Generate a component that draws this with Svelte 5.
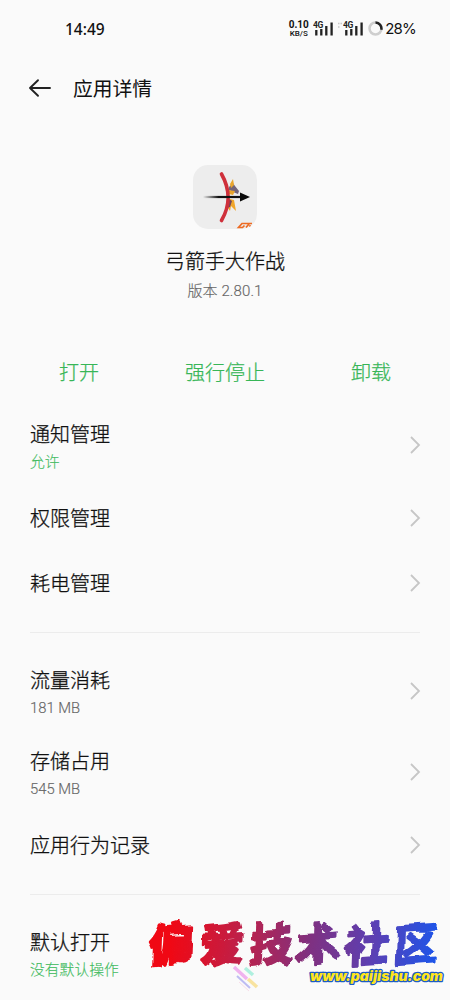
<script>
	const actions = ['打开', '强行停止', '卸载'];

	const groups = [
		[
			{ title: '通知管理', note: '允许', accent: true },
			{ title: '权限管理' },
			{ title: '耗电管理' }
		],
		[
			{ title: '流量消耗', note: '181 MB' },
			{ title: '存储占用', note: '545 MB' },
			{ title: '应用行为记录' }
		],
		[{ title: '默认打开', note: '没有默认操作', accent: true, plain: true }]
	];

	const brand = [
		{ char: '偏', x: 171 },
		{ char: '爱', x: 223 },
		{ char: '技', x: 271 },
		{ char: '术', x: 317 },
		{ char: '社', x: 367 },
		{ char: '区', x: 416 }
	];
</script>

{#snippet signal()}
	<svg class="signal" width="21" height="15" viewBox="0 0 21 15">
		<path d="M3.3 9v5.5M8.3 8v6.5M13.3 5v9.5M18.6 1.5v13" />
		<text x="0" y="7">4G</text>
	</svg>
{/snippet}

<main>
	<header class="status">
		<time>14:49</time>
		<div class="indicators">
			<div class="speed"><b>0.10</b><span>KB/S</span></div>
			{@render signal()}
			<svg class="dots" width="4" height="7" viewBox="0 0 4 7">
				<path d="M0 1.5h1.5M2.5 1.5H4M0 5h1.5" />
			</svg>
			{@render signal()}
			<svg class="ring" width="15" height="15" viewBox="0 0 15 15">
				<circle cx="7.5" cy="7.5" r="6" />
				<path d="M7.5 1.5a6 6 0 0 1 5.8 7.2" />
			</svg>
			<span class="battery">28%</span>
		</div>
	</header>

	<nav>
		<svg width="24" height="20" viewBox="0 0 24 20">
			<path d="M10 2.2 2 10l8 7.8M2 10h20" />
		</svg>
		<h1>应用详情</h1>
	</nav>

	<section class="app">
		<svg width="64" height="64" viewBox="0 0 64 64">
			<defs>
				<linearGradient id="shaft">
					<stop offset="0" stop-color="#111" stop-opacity="0" />
					<stop offset="0.4" stop-color="#111" />
				</linearGradient>
				<clipPath id="tile"><rect width="64" height="64" rx="15" /></clipPath>
			</defs>
			<rect width="64" height="64" rx="15" fill="#ededed" />
			<path d="M36 22l4-4 2 3 4 5-1 3-5-2-4-2z" fill="#72647a" />
			<path d="M37 19l3-5 1 6-3 3zM35 25l7 1-2 4-4-1z" fill="#e8a52d" />
			<path d="M37 34l4 1 2 11-5-5-1 5-2-3z" fill="#f0a62b" />
			<path d="M36 34l3 2-2 6-3 1z" fill="#70445d" />
			<path d="M28.5 9C37.5 25 37.5 40 28.5 55.5" fill="none" stroke="#cf303b" stroke-width="3.6" stroke-linecap="round" />
			<rect x="10" y="30.9" width="39" height="2.2" fill="url(#shaft)" />
			<path d="M47 27.6l10 4.4-10 4.4z" fill="#080808" />
			<g clip-path="url(#tile)" fill="none" stroke="#ed6b23" stroke-width="1.7">
				<path d="M59 58.5H49l-3.5 4h4l2-2M56 59l-3 3.5M56 61h2" />
			</g>
		</svg>
		<h2>弓箭手大作战</h2>
		<p>版本 2.80.1</p>
	</section>

	<div class="actions">
		{#each actions as action}
			<button>{action}</button>
		{/each}
	</div>

	{#each groups as group}
		<ul>
			{#each group as item}
				<li class:double={item.note}>
					<div>
						<h3>{item.title}</h3>
						{#if item.note}
							<p class:accent={item.accent}>{item.note}</p>
						{/if}
					</div>
					{#if !item.plain}
						<svg class="chevron" width="12" height="20" viewBox="0 0 12 20">
							<path d="M2 2l8 8-8 8" />
						</svg>
					{/if}
				</li>
			{/each}
		</ul>
	{/each}

	<svg class="watermark" width="450" height="110" viewBox="0 -20 450 110">
		<defs>
			<linearGradient id="ink" gradientUnits="userSpaceOnUse" x1="148" y1="0" x2="438" y2="0">
				<stop offset="0.08" stop-color="#f00814" />
				<stop offset="0.33" stop-color="#bc214b" />
				<stop offset="0.55" stop-color="#81307e" />
				<stop offset="0.78" stop-color="#5b40b4" />
				<stop offset="1" stop-color="#1c55ea" />
			</linearGradient>
			<!-- uneven brush strokes -->
			<filter id="brush" x="-5%" y="-20%" width="110%" height="140%" color-interpolation-filters="sRGB">
				<feTurbulence type="fractalNoise" baseFrequency="0.05" numOctaves="1" seed="7" />
				<feDisplacementMap in="SourceGraphic" scale="10" xChannelSelector="R" yChannelSelector="G" />
				<feGaussianBlur stdDeviation="0.45" />
			</filter>
		</defs>
		<g fill="none" stroke-width="3.5">
			<path d="M234 57l13 12" stroke="#f0b3ee" />
			<path d="M245 58l8 7" stroke="#aff0df" />
			<path d="M248 69l9 8" stroke="#f8e3a0" />
			<path d="M237 66l13 12" stroke="#bdbcf2" stroke-width="2" />
			<path d="M239 72l10 9" stroke="#f8dce8" stroke-width="1" />
		</g>
		<g filter="url(#brush)">
			<g class="brand" fill="url(#ink)" stroke="url(#ink)">
				{#each brand as { char, x }}
					<text {x} y="51" transform="rotate(-4 {x} 34) skewX(-6) translate(3.5 0)">{char}</text>
				{/each}
			</g>
		</g>
		<text class="url" x="310" y="71" textLength="133" lengthAdjust="spacingAndGlyphs">www.paijishu.com</text>
	</svg>
</main>

<style>
	:global(body) {
		background: #fafafa;
	}

	main {
		position: relative;
		height: 1000px;
		overflow: hidden;
		background: #fafafa;
		color: #111;
		font-family: Roboto, 'Noto Sans CJK SC', sans-serif;
	}

	h1,
	h2,
	h3,
	p,
	ul {
		margin: 0;
		padding: 0;
		font-weight: 400;
	}

	svg {
		display: block;
		flex: none;
	}

	.status {
		display: flex;
		align-items: center;
		justify-content: space-between;
		height: 57px;
		padding: 0 35px 0 65px;
	}

	time {
		font: 500 15.5px 'Noto Sans', sans-serif;
	}

	.indicators {
		display: flex;
		align-items: center;
	}

	.speed {
		display: flex;
		flex-direction: column;
		align-items: center;
		width: 20px;
		margin-right: 4px;
		font-size: 8px;
		line-height: 9px;
		font-weight: 500;
	}

	.speed b {
		font-size: 10px;
		line-height: 9px;
	}

	.signal path {
		stroke: #222;
		stroke-width: 2.3;
	}

	.signal text {
		font: 700 8.5px Roboto, sans-serif;
		letter-spacing: -0.5px;
		fill: #222;
		stroke: #fafafa;
		stroke-width: 1;
		paint-order: stroke;
	}

	.dots {
		margin: 0 1px 7px 4px;
	}

	.dots path {
		stroke: #c8c8c8;
		stroke-width: 1.4;
	}

	.ring {
		margin: 0 2.5px 0 4px;
		fill: none;
		stroke: #cecece;
		stroke-width: 2.5;
	}

	.ring path {
		stroke: #222;
	}

	.battery {
		margin-right: -1px;
		font: 15px Inter, sans-serif;
		letter-spacing: -0.8px;
	}

	nav {
		display: flex;
		align-items: center;
		gap: 21px;
		height: 61px;
		padding-left: 28px;
	}

	nav path {
		fill: none;
		stroke: #222;
		stroke-width: 1.9;
		stroke-linecap: round;
		stroke-linejoin: round;
	}

	h1 {
		font-size: 19.8px;
	}

	.app {
		display: flex;
		flex-direction: column;
		align-items: center;
		padding-top: 46.5px;
	}

	.app svg {
		margin-bottom: 18px;
	}

	h2,
	h3 {
		font-size: 20px;
		font-weight: 300;
		line-height: 30px;
		-webkit-text-stroke: 0.3px;
	}

	.app p {
		margin-top: 4px;
		font-size: 15px;
		font-weight: 300;
		line-height: 20px;
		letter-spacing: 0.1px;
		color: #666;
		-webkit-text-stroke: 0.15px;
	}

	.actions {
		display: grid;
		grid-template-columns: repeat(3, 146px);
		justify-content: center;
		margin-top: 50px;
		margin-bottom: 12px;
	}

	button {
		height: 42px;
		padding: 0;
		border: 0;
		background: none;
		color: #37b657;
		font: inherit;
		font-size: 20px;
		font-weight: 300;
		-webkit-text-stroke: 0.25px;
	}

	ul {
		margin: 0 30px;
		list-style: none;
	}

	ul + ul {
		margin-top: 16px;
		padding-top: 18px;
		border-top: 1px solid #ececec;
	}

	li {
		display: flex;
		align-items: center;
		justify-content: space-between;
		height: 65px;
	}

	li:not(.double) div {
		padding-top: 2px;
	}

	.double {
		height: 81px;
	}

	.double div {
		padding-top: 3px;
	}

	li p {
		margin-top: 1px;
		font-size: 14.8px;
		font-weight: 300;
		line-height: 22px;
		color: #666;
		-webkit-text-stroke: 0.15px;
	}

	li .accent {
		color: #42bb5f;
	}

	.chevron {
		margin-right: -1px;
		fill: none;
		stroke: #c6c6c6;
		stroke-width: 1.8;
	}

	.watermark {
		position: absolute;
		left: 0;
		bottom: 0;
	}

	.brand text {
		font: 900 44px 'Noto Sans CJK SC', sans-serif;
		text-anchor: middle;
		stroke-width: 1.8;
		stroke-linejoin: bevel;
	}

	.url {
		font: italic 900 13.5px Inter, sans-serif;
		fill: #ffe51c;
		stroke: #1c5cc4;
		stroke-width: 2.6;
		stroke-linejoin: round;
		paint-order: stroke;
	}
</style>
